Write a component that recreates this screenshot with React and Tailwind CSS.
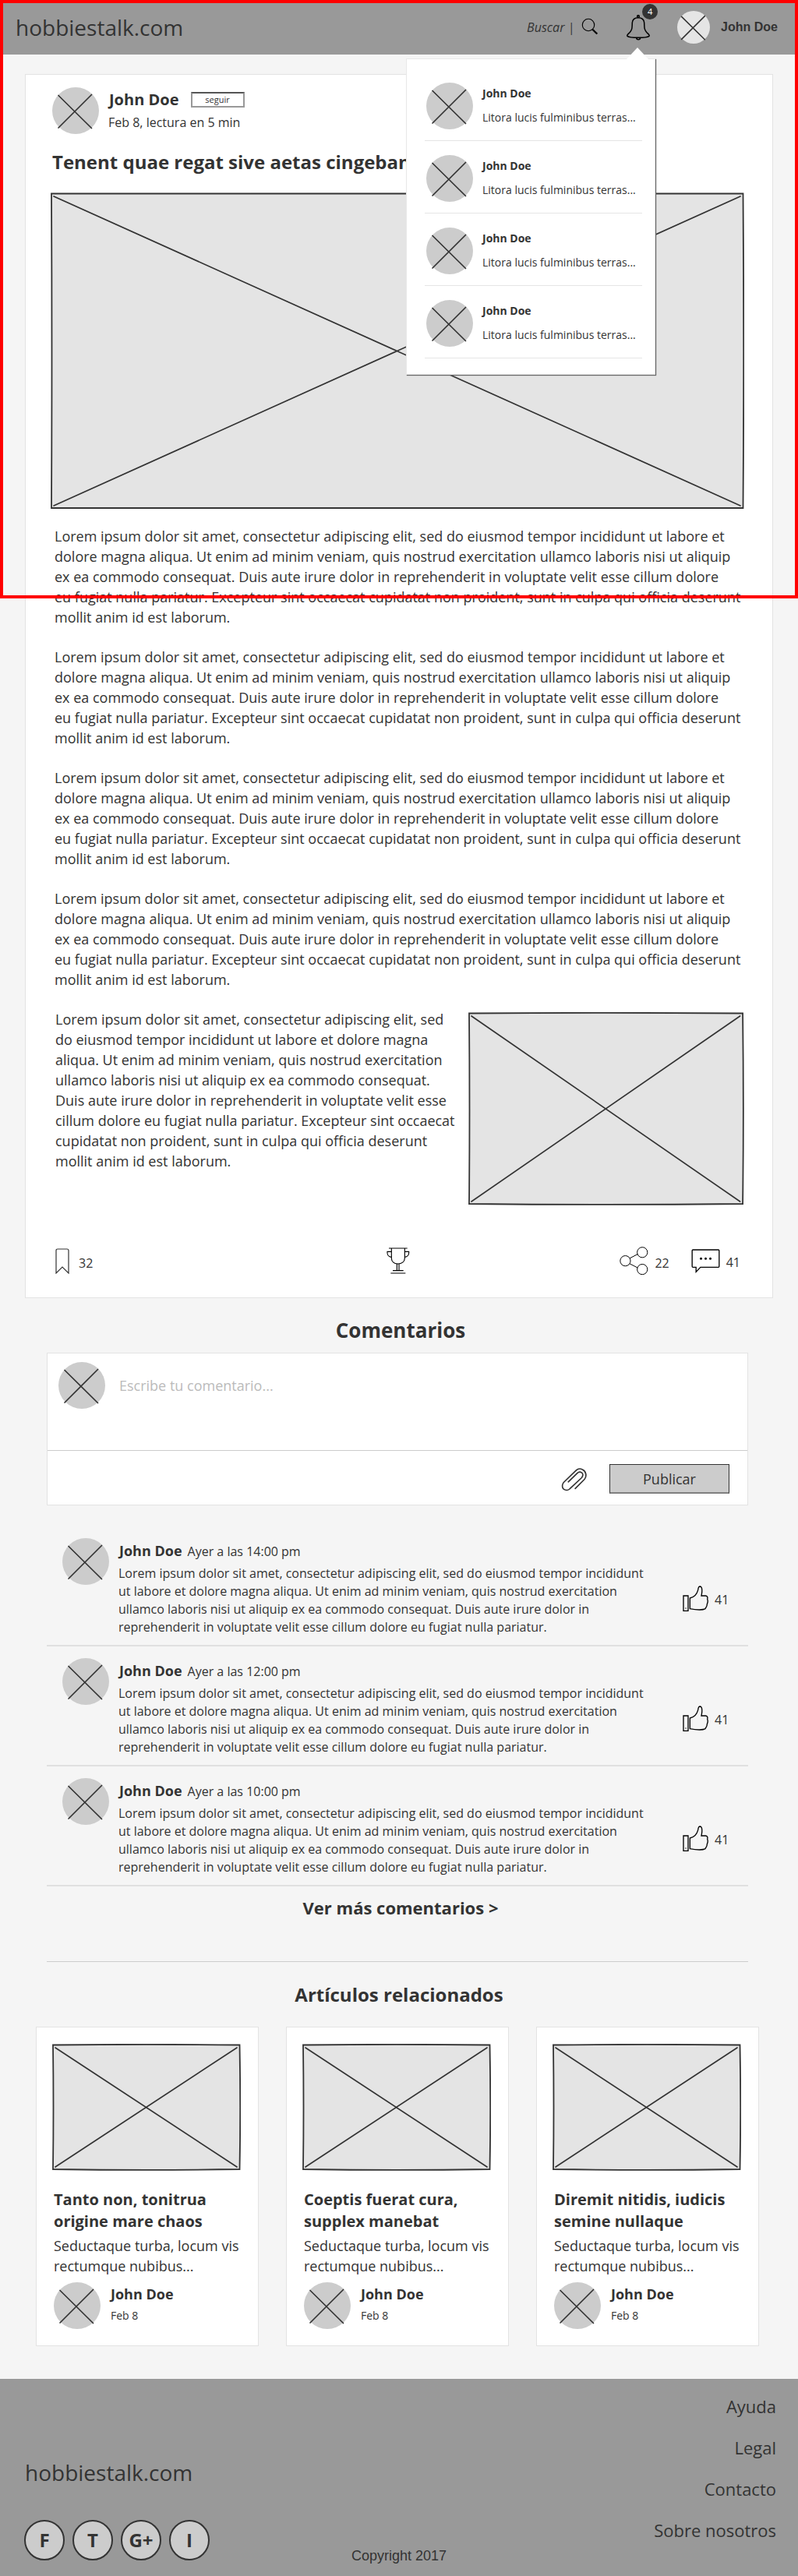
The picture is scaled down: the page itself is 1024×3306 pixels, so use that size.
import React from "react";

const LOREM =
  "Lorem ipsum dolor sit amet, consectetur adipiscing elit, sed do eiusmod tempor incididunt ut labore et dolore magna aliqua. Ut enim ad minim veniam, quis nostrud exercitation ullamco laboris nisi ut aliquip ex ea commodo consequat. Duis aute irure dolor in reprehenderit in voluptate velit esse cillum dolore eu\u00a0fugiat nulla pariatur.";
const LOREM_LONG =
  LOREM +
  " Excepteur sint occaecat cupidatat non proident, sunt in culpa qui officia deserunt mollit anim id est laborum.";

const NOTIFICATIONS = [1, 2, 3, 4];
const COMMENTS = ["14:00", "12:00", "10:00"];
const RELATED = [
  "Tanto non, tonitrua origine mare chaos",
  "Coeptis fuerat cura, supplex manebat",
  "Diremit nitidis, iudicis semine nullaque",
];
const LINKS = ["Ayuda", "Legal", "Contacto", "Sobre nosotros"];
const SOCIAL = [
  ["F", "Facebook"],
  ["T", "Twitter"],
  ["G+", "Google+"],
  ["I", "Instagram"],
];

function Avatar({ small = false }) {
  return (
    <svg
      viewBox="0 0 60 60"
      aria-hidden="true"
      className={small ? "size-[42px] shrink-0" : "size-[60px] shrink-0"}
    >
      <circle cx="30" cy="30" r="30" fill={small ? "#e5e5e5" : "#cccccc"} />
      <path
        d="M8 10.5L50.5 52.5M50.5 9.5L8 52"
        stroke="#333"
        strokeWidth={small ? 2.2 : 1.7}
        strokeLinecap="round"
      />
    </svg>
  );
}

/* Hand-drawn image placeholder; the edges bow slightly. */
function Placeholder({ w, h }) {
  return (
    <svg viewBox={`0 0 ${w} ${h}`} role="img" aria-label="Imagen" className="block h-auto w-full">
      <path
        d={`M1 1.5Q${w / 2} 0.2 ${w - 1.5} 1.5Q${w} ${h / 2} ${w - 1.5} ${h - 2}Q${w / 2} ${h - 0.2} 1 ${h - 2}Q2 ${h / 2} 1 1.5Z`}
        fill="#e4e4e4"
        stroke="#333"
        strokeWidth="1.8"
      />
      <path
        d={`M4 5L${w - 5} ${h - 5}M${w - 5} 5L4 ${h - 5}`}
        stroke="#333"
        strokeWidth="1.7"
        strokeLinecap="round"
      />
    </svg>
  );
}

function SearchIcon() {
  return (
    <svg viewBox="0 0 22 22" className="size-[22px]" fill="none" stroke="#000">
      <circle cx="9" cy="9" r="7.7" strokeWidth="1.1" />
      <path d="M14 14.5L20.3 20.5" strokeWidth="2.2" />
    </svg>
  );
}

function BellIcon() {
  return (
    <svg viewBox="876 56 90 99" className="h-[33px] w-[30px]" fill="none" stroke="#000" strokeWidth="4.5">
      <circle cx="921" cy="62" r="4" />
      <path d="M921 67C908 67 899 74 898 86C897 105 899 112 888 124C880 132 876 134 879 138C884 142 900 144 921 144C942 144 958 142 963 138C966 134 962 132 954 124C943 112 945 105 944 86C943 74 934 67 921 67Z" />
      <path d="M914 144C914 154 929 154 929 144" />
    </svg>
  );
}

function BookmarkIcon() {
  return (
    <svg viewBox="0 0 18 33" className="h-[33px] w-[18px]" fill="none" stroke="#333" strokeWidth="1.2">
      <path d="M1 32V3Q1 1 3 1H15Q17 1 17 3V32L9 24Z" />
    </svg>
  );
}

function TrophyIcon() {
  return (
    <svg viewBox="52 35 90 102" className="h-[34px] w-[30px]" fill="none" stroke="#000" strokeWidth="3.4">
      <path d="M61 38H132M71 38V76C71 90 82 98 96 98S122 90 122 76V38" />
      <path d="M71 51H55C54 62 60 71 71 72M122 51H138C139 62 133 71 122 72" />
      <path d="M92 98V124M100 98V124M76 124H117M68 134H125" />
    </svg>
  );
}

function ShareIcon() {
  return (
    <svg viewBox="944 29 111 109" className="h-9 w-[37px]" fill="none" stroke="#000" strokeWidth="3">
      <circle cx="966" cy="84" r="20" />
      <circle cx="1032" cy="51" r="20" />
      <circle cx="1032" cy="117" r="20" />
      <path d="M983 74L1014 58M983 95L1014 111" />
    </svg>
  );
}

function BubbleIcon() {
  return (
    <svg viewBox="1220 41 110 93" className="h-[31px] w-[37px]" fill="none" stroke="#000" strokeWidth="4">
      <path d="M1226 44H1324Q1327 44 1327 47V108Q1327 111 1324 111H1255L1238 129V111H1226Q1223 111 1223 108V47Q1223 44 1226 44Z" />
      <g fill="#000" stroke="none">
        <circle cx="1257" cy="78" r="4.5" />
        <circle cx="1275" cy="78" r="4.5" />
        <circle cx="1293" cy="78" r="4.5" />
      </g>
    </svg>
  );
}

function ClipIcon() {
  return (
    <svg viewBox="87 66 100 92" className="h-[31px] w-[33px]" fill="none" stroke="#333" strokeWidth="5" strokeLinecap="round">
      <path d="M142 148L178 112C188 100 184 80 170 74C160 69 152 71 146 77L97 124C90 132 90 144 97 150C105 156 115 155 121 149L167 106C173 99 173 90 167 86C161 82 155 83 150 88L115 122" />
    </svg>
  );
}

function ThumbIcon() {
  return (
    <svg viewBox="557 523 99 99" className="size-[33px]" fill="none" stroke="#000" strokeWidth="4">
      <path d="M560 562H578V620H560Z" />
      <path d="M585 571C600 568 612 555 616 540C617 530 619 526 624 526C632 527 632 540 631 550L629 562H645C652 563 654 568 652 575C655 582 653 590 651 594C651 604 647 606 644 612C636 617 610 617 585 612Z" />
      <circle cx="569" cy="610" r="2" fill="#000" stroke="none" />
    </svg>
  );
}

function NotificationPanel() {
  return (
    <div className="absolute top-[75px] right-[183px] z-20 w-80 border border-[#e8e8e8] bg-white pt-3 pr-4 pb-5 pl-[23px] shadow-[1px_1px_1px_#666]">
      <svg viewBox="0 0 28 15" aria-hidden="true" className="absolute -top-[15px] right-2 h-[15px] w-7">
        <path d="M0 15L14 0L28 15Z" fill="#fff" />
      </svg>
      <ul>
        {NOTIFICATIONS.map((n) => (
          <li key={n} className="flex gap-3 border-b border-[#e5e5e5] pt-[18px] pb-3.5 pl-0.5 text-sm leading-[19px]">
            <Avatar />
            <div className="flex flex-col gap-3 pt-1 whitespace-nowrap">
              <strong className="font-bold">John Doe</strong>
              <span>Litora lucis fulminibus terras...</span>
            </div>
          </li>
        ))}
      </ul>
    </div>
  );
}

function Header() {
  return (
    <header className="relative flex h-[70px] items-center bg-[#999] pr-[26px] pl-5">
      <a href="#inicio" className="mr-auto text-[28px] leading-[38px]">
        hobbiestalk.com
      </a>
      <form className="flex items-center" onSubmit={(e) => e.preventDefault()}>
        <input
          type="text"
          aria-label="Buscar"
          placeholder="Buscar |"
          className="w-[70px] bg-transparent text-base leading-[22px] italic outline-none placeholder:text-[#333] placeholder:opacity-100"
        />
        <button type="submit" aria-label="Buscar" className="-mt-0.5">
          <SearchIcon />
        </button>
      </form>
      <button type="button" aria-label="Notificaciones" className="relative ml-9">
        <BellIcon />
        <span className="absolute -top-3.5 -right-2.5 flex size-5 items-center justify-center rounded-full bg-[#333] text-[11px] leading-none text-white">
          4
        </span>
      </button>
      <a
        href="#perfil"
        className="ml-[35px] flex items-center gap-3.5 font-['Liberation_Sans',sans-serif] text-base font-bold whitespace-nowrap"
      >
        <Avatar small />
        John Doe
      </a>
      <NotificationPanel />
    </header>
  );
}

function Article() {
  return (
    <article className="mx-8 mt-[25px] border border-[#e3e3e3] bg-white pt-4 pr-9 pb-[29px] pl-8">
      <div className="flex gap-3 pl-0.5">
        <Avatar />
        <div className="pt-0.5">
          <div className="flex items-center gap-[15px] pl-px">
            <strong className="text-xl leading-[27px] font-bold">John Doe</strong>
            <button
              type="button"
              className="h-5 w-[69px] border-2 border-[#999] border-t-[#555] text-[11px] leading-none"
            >
              seguir
            </button>
          </div>
          <p className="mt-[5px] text-base leading-[22px]">Feb 8, lectura en 5 min</p>
        </div>
      </div>
      <h1 className="mt-[19px] mb-[23px] pl-0.5 text-2xl leading-[33px] font-bold">
        Tenent quae regat sive aetas cingebant
      </h1>
      <Placeholder w={890} h={407} />
      <div className="mt-[21px] flex flex-col gap-[25px] text-lg leading-[26px]">
        {[1, 2, 3, 4].map((n) => (
          <p key={n} className="pl-[5px]">
            {LOREM_LONG}
          </p>
        ))}
        <div className="flex gap-2 pl-1.5">
          <p className="flex-1">{LOREM_LONG}</p>
          <div className="mt-1 w-2/5">
            <Placeholder w={355} h={249} />
          </div>
        </div>
      </div>
      <div className="mt-[53px] grid grid-cols-3 items-center pr-[5px] pl-1.5 text-base leading-[22px]">
        <button type="button" className="flex items-center gap-3 justify-self-start">
          <BookmarkIcon />
          <span className="pt-1.5">32</span>
        </button>
        <button type="button" aria-label="Destacar" className="justify-self-center">
          <TrophyIcon />
        </button>
        <div className="flex items-center gap-7 justify-self-end">
          <button type="button" className="flex items-center gap-2">
            <ShareIcon />
            <span className="pt-1.5">22</span>
          </button>
          <button type="button" className="flex items-center gap-2">
            <BubbleIcon />
            <span className="pt-1">41</span>
          </button>
        </div>
      </div>
    </article>
  );
}

function Comments() {
  return (
    <section>
      <h2 className="mt-6 pl-1 text-center text-[26px] leading-[35px] font-bold">Comentarios</h2>
      <form
        className="mt-[11px] mr-16 ml-[60px] border border-[#e3e3e3] bg-white"
        onSubmit={(e) => e.preventDefault()}
      >
        <div className="flex gap-[18px] border-b border-[#ccc] pt-[11px] pr-6 pb-3 pl-[14px]">
          <Avatar />
          <textarea
            aria-label="Escribe tu comentario"
            placeholder="Escribe tu comentario..."
            className="h-[101px] flex-1 resize-none bg-transparent pt-[18px] text-lg leading-6 outline-none placeholder:text-[#bbb] placeholder:opacity-100"
          />
        </div>
        <div className="flex items-center justify-end gap-[29px] pt-[17px] pr-[23px] pb-3.5">
          <button type="button" aria-label="Adjuntar archivo">
            <ClipIcon />
          </button>
          <button
            type="submit"
            className="h-[38px] w-[154px] border border-b-2 border-[#333] border-b-[#808080] bg-[#ccc] text-lg leading-6"
          >
            Publicar
          </button>
        </div>
      </form>
      <ul className="mt-[27px] mr-16 ml-[60px]">
        {COMMENTS.map((time) => (
          <li key={time} className="flex border-b-2 border-[#e0e0e0] pt-[15px] pb-[11px] pl-5">
            <Avatar />
            <div className="flex-1 pt-1 pl-3">
              <p className="flex h-6 items-baseline gap-[7px] pl-px leading-6">
                <strong className="text-lg leading-6 font-bold">John Doe</strong>
                <span className="text-base leading-6">Ayer a las {time} pm</span>
              </p>
              <p className="mt-1.5 text-base leading-[23px]">{LOREM}</p>
            </div>
            <button
              type="button"
              aria-label="Me gusta, 41"
              className="mt-[61px] ml-10 flex w-[84px] items-center gap-2 self-start text-base leading-[22px]"
            >
              <ThumbIcon />
              <span className="pt-0.5">41</span>
            </button>
          </li>
        ))}
      </ul>
      <div className="mt-3 pl-1 text-center text-[22px] leading-[30px] font-bold">
        <a href="#comentarios">Ver más comentarios &gt;</a>
      </div>
      <hr className="mt-[54px] mr-16 ml-[60px] border-[#ccc]" />
    </section>
  );
}

function Related() {
  return (
    <section>
      <h2 className="mt-[25px] text-center text-2xl leading-[33px] font-bold">Artículos relacionados</h2>
      <div className="mt-[25px] mr-[50px] ml-[46px] grid grid-cols-3 gap-[35px]">
        {RELATED.map((title) => (
          <article key={title} className="border border-[#e3e3e3] bg-white pt-[21px] pr-[22px] pb-[21px] pl-5">
            <Placeholder w={242} h={163} />
            <div className="mt-[23px] pl-0.5">
              <h3 className="text-xl leading-7 font-bold">{title}</h3>
              <p className="mt-1 text-lg leading-[26px]">Seductaque turba, locum vis rectumque nubibus...</p>
              <div className="mt-2 flex gap-[13px]">
                <Avatar />
                <div className="flex flex-col gap-1.5 pt-[3px]">
                  <strong className="text-lg leading-6 font-bold">John Doe</strong>
                  <span className="text-sm leading-[19px]">Feb 8</span>
                </div>
              </div>
            </div>
          </article>
        ))}
      </div>
    </section>
  );
}

function Footer() {
  return (
    <footer className="mt-[42px] grid grid-cols-3 items-end bg-[#999] pt-5 pr-7 pb-4 pl-7">
      <div className="pb-1 pl-1">
        <a href="#inicio" className="text-[28px] leading-[38px]">
          hobbiestalk.com
        </a>
        <div className="mt-[42px] -ml-px flex gap-2.5">
          {SOCIAL.map(([letter, name]) => (
            <a
              key={name}
              href={"#" + name}
              aria-label={name}
              className="flex size-[52px] items-center justify-center rounded-full border-2 border-[#333] bg-[#ccc] text-2xl leading-8 font-bold"
            >
              {letter}
            </a>
          ))}
        </div>
      </div>
      <p className="text-center font-['Liberation_Sans',sans-serif] text-lg leading-5">Copyright 2017</p>
      <nav className="flex flex-col items-end gap-[23px] self-start pb-7 text-[22px] leading-[30px]">
        {LINKS.map((l) => (
          <a key={l} href={"#" + l}>
            {l}
          </a>
        ))}
      </nav>
    </footer>
  );
}

export default function App() {
  return (
    <div className="relative bg-[#f5f5f5] font-['Open_Sans',sans-serif] text-[#333]">
      <Header />
      <main>
        <Article />
        <Comments />
        <Related />
      </main>
      <Footer />
      <div className="pointer-events-none absolute inset-x-0 top-0 z-30 h-[768px] border-4 border-[#ff0000]" />
    </div>
  );
}
